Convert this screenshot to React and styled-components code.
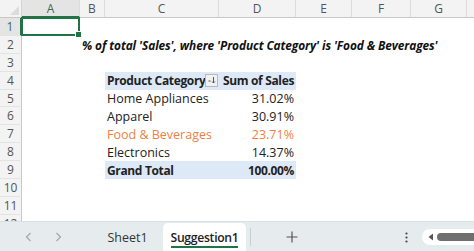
import React from "react";
import styled, { createGlobalStyle, css } from "styled-components";

const GlobalStyle = createGlobalStyle`
  html, body {
    margin: 0;
    padding: 0;
    background: #ffffff;
  }
  body {
    font-family: "Open Sans", "Liberation Sans", sans-serif;
    overflow: hidden;
  }
`;

const COLS = ["A", "B", "C", "D", "E", "F", "G", ""];
const ROW_COUNT = 12;

const Sheet = styled.div`
  width: 474px;
  height: 251px;
  display: flex;
  flex-direction: column;
  overflow: hidden;
  background: #fff;
`;

const Grid = styled.div`
  flex: 1;
  display: grid;
  grid-template-columns: 22px 58px 25px 114px 77px 56px 59px 56px 40px;
  grid-template-rows: 18px repeat(${ROW_COUNT}, 17.9px);
  overflow: hidden;
`;

const Corner = styled.div`
  background: #f3f3f3;
  border-right: 1px solid #d4d4d4;
  border-bottom: 1px solid #c8c8c8;
  position: relative;
  &::after {
    content: "";
    position: absolute;
    right: 2px;
    bottom: 2px;
    border-left: 9px solid transparent;
    border-bottom: 9px solid #dcdcdc;
  }
`;

const ColHead = styled.div`
  display: flex;
  align-items: center;
  justify-content: center;
  font-size: 12px;
  color: #555;
  background: #f3f3f3;
  border-right: 1px solid #dcdcdc;
  border-bottom: 1px solid #c8c8c8;
  ${(p) =>
    p.$active &&
    css`
      background: #e4e4e4;
      color: #3a6e50;
      border-bottom: 2px solid #217346;
    `}
`;

const RowHead = styled.div`
  display: flex;
  align-items: center;
  justify-content: center;
  font-size: 12px;
  color: #555;
  background: #f3f3f3;
  border-right: 1px solid #c8c8c8;
  border-bottom: 1px solid #e3e3e3;
  ${(p) =>
    p.$active &&
    css`
      background: #e4e4e4;
      color: #3a6e50;
      border-right: 2px solid #217346;
    `}
`;

const Cell = styled.div`
  position: relative;
  display: flex;
  align-items: center;
  min-width: 0;
  padding: 0 2px;
  font-size: 12.5px;
  color: #222;
  white-space: nowrap;
  ${(p) => p.$right && "justify-content: flex-end;"}
  ${(p) =>
    p.$bold &&
    css`
      font-weight: 700;
      font-size: 12px;
      letter-spacing: -0.35px;
    `}
  ${(p) => p.$band && "background: #dde9f7;"}
  ${(p) => p.$accent && "color: #ee7f45;"}
`;

const Selected = styled.div`
  position: absolute;
  inset: -1px 0 0 -1px;
  border: 2px solid #217346;
  &::after {
    content: "";
    position: absolute;
    right: -4px;
    bottom: -4px;
    width: 5px;
    height: 5px;
    background: #217346;
    border: 1px solid #fff;
  }
`;

const Title = styled.span`
  font-weight: 700;
  font-style: italic;
  font-size: 11.9px;
  letter-spacing: -0.1px;
  color: #111;
`;

const SortButton = styled.span`
  flex: none;
  margin-left: auto;
  margin-right: 1px;
  width: 13px;
  height: 13px;
  box-sizing: border-box;
  border: 1px solid #b9b9b9;
  background: #f1f1f1;
  display: flex;
  align-items: center;
  justify-content: center;
`;

const TabBar = styled.div`
  height: 29px;
  flex: none;
  display: flex;
  align-items: flex-end;
  padding-left: 14px;
  background: #e6ebee;
  border-top: 1px solid #d9dfe2;
`;

const NavArrow = styled.span`
  width: 29px;
  height: 28px;
  display: flex;
  align-items: center;
  justify-content: center;
`;

const Tab = styled.div`
  height: 28px;
  width: ${(p) => p.$width}px;
  margin-left: ${(p) => p.$gap || 0}px;
  display: flex;
  align-items: center;
  justify-content: center;
  font-size: 12.5px;
  color: #333;
  ${(p) =>
    p.$active &&
    css`
      background: #fff;
      border-radius: 5px 5px 0 0;
      font-weight: 600;
      font-size: 12.2px;
      letter-spacing: -0.3px;
      color: #222;
      & > span {
        border-bottom: 2px solid #217346;
        line-height: 17px;
        margin-top: 2px;
      }
    `}
`;

const Divider = styled.span`
  width: 1px;
  height: 18px;
  background: #c9cfd2;
  align-self: center;
  margin-left: 4px;
`;

const AddSheet = styled.span`
  width: 82px;
  height: 28px;
  display: flex;
  align-items: center;
  justify-content: center;
`;

const Spacer = styled.div`
  flex: 1;
`;

const Dots = styled.span`
  width: 16px;
  height: 28px;
  display: flex;
  align-items: center;
  justify-content: center;
  margin-right: 8px;
`;

const Scroll = styled.div`
  width: 50px;
  height: 16px;
  align-self: center;
  background: #fff;
  border-radius: 8px 0 0 8px;
  display: flex;
  align-items: center;
  padding-left: 6px;
  gap: 3px;
  margin-right: -4px;
`;

const Thumb = styled.span`
  flex: 1;
  height: 8px;
  border-radius: 4px 0 0 4px;
  background: #6f6f6f;
`;

const rows = [
  { name: "Home Appliances", value: "31.02%" },
  { name: "Apparel", value: "30.91%" },
  { name: "Food & Beverages", value: "23.71%", accent: true },
  { name: "Electronics", value: "14.37%" },
];

const SortIcon = () => (
  <svg width="9" height="9" viewBox="0 0 9 9">
    <path d="M6.5 1v6M5 5.5l1.5 1.5 1.5-1.5" stroke="#555" fill="none" strokeWidth="1" />
    <path d="M1.5 5h2" stroke="#555" strokeWidth="1" />
  </svg>
);

const cellsFor = (r) => {
  const idx = r - 5;
  return COLS.map((c, i) => {
    const key = c || `x${i}`;
    if (r === 1 && c === "A")
      return (
        <Cell key={key}>
          <Selected />
        </Cell>
      );
    if (r === 4 && c === "C")
      return (
        <Cell key={key} $band $bold>
          Product Category
          <SortButton>
            <SortIcon />
          </SortButton>
        </Cell>
      );
    if (r === 4 && c === "D")
      return (
        <Cell key={key} $band $bold $right>
          Sum of Sales
        </Cell>
      );
    if (idx >= 0 && idx < rows.length && (c === "C" || c === "D")) {
      const row = rows[idx];
      return (
        <Cell key={key} $right={c === "D"} $accent={row.accent}>
          {c === "C" ? row.name : row.value}
        </Cell>
      );
    }
    if (r === 9 && (c === "C" || c === "D"))
      return (
        <Cell key={key} $band $bold $right={c === "D"}>
          {c === "C" ? "Grand Total" : "100.00%"}
        </Cell>
      );
    return <Cell key={key} />;
  });
};

const App = () => {
  const rowNums = Array.from({ length: ROW_COUNT }, (_, i) => i + 1);

  return (
    <Sheet>
      <GlobalStyle />
      <Grid>
        <Corner />
        {COLS.map((c, i) => (
          <ColHead key={c || `h${i}`} $active={c === "A"}>
            {c}
          </ColHead>
        ))}
        {rowNums.map((r) => (
          <React.Fragment key={r}>
            <RowHead $active={r === 1}>{r}</RowHead>
            {r === 2 ? (
              <>
                <Cell />
                <Cell style={{ gridColumn: "3 / span 7" }}>
                  <Title>% of total 'Sales', where 'Product Category' is 'Food &amp; Beverages'</Title>
                </Cell>
              </>
            ) : (
              cellsFor(r)
            )}
          </React.Fragment>
        ))}
      </Grid>
      <TabBar>
        <NavArrow>
          <svg width="8" height="10" viewBox="0 0 8 10">
            <path d="M5.5 1L1.5 5l4 4" stroke="#a2a8ac" fill="none" strokeWidth="1.2" />
          </svg>
        </NavArrow>
        <NavArrow>
          <svg width="8" height="10" viewBox="0 0 8 10">
            <path d="M2.5 1l4 4-4 4" stroke="#a2a8ac" fill="none" strokeWidth="1.2" />
          </svg>
        </NavArrow>
        <Tab $width={71} $gap={20}>Sheet1</Tab>
        <Tab $active $width={83}>
          <span>Suggestion1</span>
        </Tab>
        <Divider />
        <AddSheet>
          <svg width="12" height="12" viewBox="0 0 12 12">
            <path d="M6 0.5v11M0.5 6h11" stroke="#555" strokeWidth="1.2" />
          </svg>
        </AddSheet>
        <Spacer />
        <Dots>
          <svg width="3" height="11" viewBox="0 0 3 11">
            <circle cx="1.5" cy="1.5" r="1.1" fill="#444" />
            <circle cx="1.5" cy="5.5" r="1.1" fill="#444" />
            <circle cx="1.5" cy="9.5" r="1.1" fill="#444" />
          </svg>
        </Dots>
        <Scroll>
          <svg width="6" height="8" viewBox="0 0 6 8">
            <path d="M5 0.5v7L0.5 4z" fill="#555" />
          </svg>
          <Thumb />
        </Scroll>
      </TabBar>
    </Sheet>
  );
};

export default App;
